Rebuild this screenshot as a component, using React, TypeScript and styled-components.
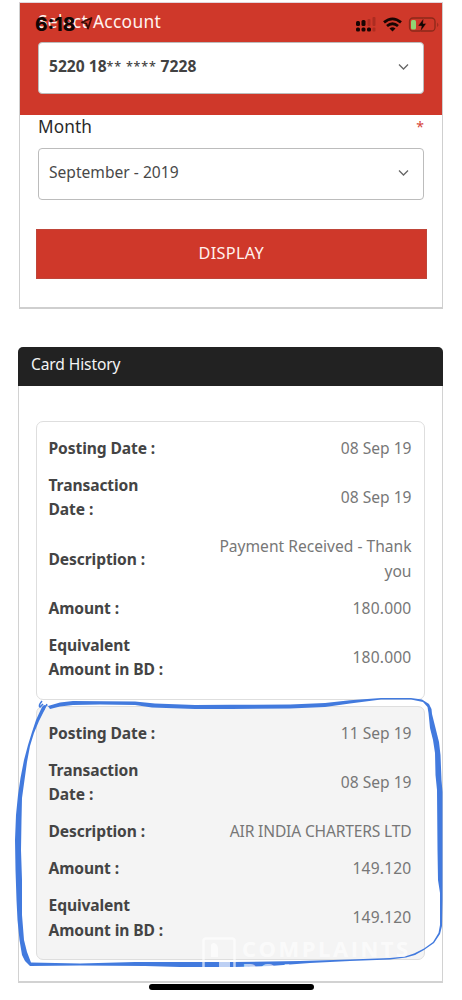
import React from "react";
import styled, { createGlobalStyle } from "styled-components";

const GlobalStyle = createGlobalStyle`
  * { box-sizing: border-box; }
  body { margin: 0; background: #fff; font-family: "Noto Sans", "Open Sans", sans-serif; font-size: 15.6px; color: #444; }
`;
const Screen = styled.main`
  position: relative;
  height: 1000px;
  overflow: hidden;
  padding: 2px 19px 0;
`;
const FormPanel = styled.section`
  height: 307px;
  border: solid #cfcfcf;
  border-width: 1px 1px 2px;
  border-top-color: #e3d5dc;
  margin-bottom: 38px;
`;
const AccountArea = styled.div`
  height: 112px;
  padding: 6px 18px 0;
  background: #cf382a;
`;
const FieldLabel = styled.label<{ $light?: boolean }>`
  display: flex;
  justify-content: space-between;
  height: 33px;
  line-height: ${(p) => (p.$light ? 25 : 23)}px;
  font-size: ${(p) => (p.$light ? 17.4 : 17.2)}px;
  letter-spacing: ${(p) => (p.$light ? 0.3 : 0.1)}px;
  color: ${(p) => (p.$light ? "#fff3ef" : "#292929")};
`;
const Required = styled.span`
  color: #d6453a;
  font-size: 14px;
  line-height: 24px;
`;
const Select = styled.div<{ $bold?: boolean }>`
  display: flex;
  align-items: center;
  justify-content: space-between;
  height: 52px;
  padding: 0 14px 4px 10px;
  border: 1px solid #bcbcbc;
  border-radius: 4px;
  background: #fff;
  color: ${(p) => (p.$bold ? "#424242" : "#484848")};
  font-weight: ${(p) => (p.$bold ? 700 : 400)};
  svg { margin-top: 2px; }
`;
const Mask = styled.span`
  font-size: 12.5px;
  font-weight: 500;
  line-height: 1;
  letter-spacing: 0.8px;
  vertical-align: 1px;
`;
const MonthArea = styled.div`
  padding: 0 18px;
`;
const DisplayButton = styled.button`
  display: block;
  width: 390.5px;
  height: 50px;
  margin: 29px 0 0 16px;
  padding: 0 0 3px;
  border: 1px solid #bf4539;
  background: #cf382a;
  color: #fff1ed;
  font: 16.3px "Noto Sans", sans-serif;
  letter-spacing: 0.3px;
`;
const HistoryPanel = styled.section`
  width: 425px;
  height: 636px;
  margin-left: -1px;
  border: solid #d2d2d2;
  border-width: 0 1px 2px;
  border-radius: 5px 5px 0 0;
`;
const HistoryTitle = styled.h2`
  height: 39px;
  margin: 0 -1px 35px;
  padding: 0 13px;
  border-radius: 5px 5px 0 0;
  background: #222;
  color: #f4f4f4;
  font-size: 15.6px;
  font-weight: 400;
  line-height: 35px;
  letter-spacing: -0.13px;
`;
const Card = styled.article<{ $shaded?: boolean }>`
  display: flex;
  flex-direction: column;
  gap: 12.3px;
  width: 388.5px;
  height: ${(p) => (p.$shaded ? 254 : 279)}px;
  margin: 0 0 6px 17px;
  padding: 14px 12px 0 11.5px;
  border: 1px solid #dedede;
  border-radius: 7px;
  background: ${(p) => (p.$shaded ? "#f4f4f4" : "#fff")};
  line-height: 24.6px;
`;
const Row = styled.div`
  display: flex;
  align-items: center;
  justify-content: space-between;
`;
const Term = styled.strong`
  width: 130px;
  white-space: pre-line;
  color: #444;
  letter-spacing: -0.1px;
`;
const Value = styled.span<{ $kind?: "number" | "caps" }>`
  width: 225px;
  white-space: pre-line;
  text-align: right;
  color: #777;
  letter-spacing: ${(p) => (p.$kind === "number" ? 0.2 : p.$kind === "caps" ? -0.17 : 0)}px;
`;
const Clock = styled.time`
  position: absolute;
  left: 35px;
  top: 12px;
  color: #120503;
  font: 800 19px/25px Inter, sans-serif;
`;
const Overlay = styled.svg`
  position: absolute;
  inset: 0;
  pointer-events: none;
`;
const Watermark = styled.div`
  position: absolute;
  left: 202px;
  top: 937px;
  display: flex;
  gap: 6px;
  color: rgba(255, 255, 255, 0.65);
  font: 700 22px/22px "Open Sans", sans-serif;
`;
const WatermarkText = styled.div`
  display: flex;
  flex-direction: column;
  letter-spacing: 2.5px;
`;
const WatermarkLine = styled.div`
  display: flex;
  gap: 8px;
  height: 22px;
  small { font-size: 9px; line-height: 12px; letter-spacing: 0.2px; }
`;
const HomeIndicator = styled.div`
  position: absolute;
  left: 149px;
  top: 984px;
  width: 165px;
  height: 6px;
  border-radius: 3px;
  background: #000;
`;

const Chevron = () => (
  <svg width="11" height="8" viewBox="0 0 11 8" fill="none" stroke="#666" strokeWidth="1.3"><path d="M1 1.5 5.5 6 10 1.5" /></svg>
);

type Entry = [string, string];
const payments: Entry[] = [
  ["Posting Date :", "08 Sep 19"],
  ["Transaction\nDate :", "08 Sep 19"],
  ["Description :", "Payment Received - Thank\nyou"],
  ["Amount :", "180.000"],
  ["Equivalent\nAmount in BD :", "180.000"],
];
const charges: Entry[] = [
  ["Posting Date :", "11 Sep 19"],
  ["Transaction\nDate :", "08 Sep 19"],
  ["Description :", "AIR INDIA CHARTERS LTD"],
  ["Amount :", "149.120"],
  ["Equivalent\nAmount in BD :", "149.120"],
];

const kindOf = (value: string) =>
  /^[\d.]+$/.test(value) ? "number" : /^[A-Z ]+$/.test(value) ? "caps" : undefined;

const Transaction = ({ rows, shaded }: { rows: Entry[]; shaded?: boolean }) => (
  <Card $shaded={shaded}>
    {rows.map(([term, value]) => (
      <Row key={term}><Term>{term}</Term><Value $kind={kindOf(value)}>{value}</Value></Row>
    ))}
  </Card>
);

const StatusIcons = () => (
  <g>
    <path d="M82 22.300 91.500 18 88 28.500 86.300 23.500Z" fill="none" stroke="#3b0b06" strokeWidth="1.8" strokeLinejoin="round" />
    <g fill="#180503">
      <rect x="356" y="21" width="4" height="5" rx="1.5" />
      <rect x="361.5" y="20" width="4" height="6" rx="1.5" />
      <rect x="356" y="27.5" width="4" height="4" rx="1.5" />
      <rect x="361.5" y="27.5" width="4" height="4" rx="1.5" />
      <rect x="367" y="27.5" width="4" height="4" rx="1.5" />
    </g>
    <g fill="#ad2c21">
      <rect x="367.5" y="19" width="3" height="7" rx="1" />
      <rect x="372.5" y="17" width="3" height="9" rx="1" />
      <rect x="372.5" y="27.5" width="3" height="4" rx="1" />
    </g>
    <g fill="none" stroke="#180503" strokeWidth="2.8">
      <path d="M384 22.4Q392.5 15.3 401 22.4" />
      <path d="M387 26Q392.5 21.4 398 26" />
    </g>
    <path d="M389.5 28.5Q392.5 26 395.5 28.5L392.5 31.5Z" fill="#180503" />
    <rect x="409.5" y="18" width="25.5" height="13" rx="3.5" fill="none" stroke="#8b291a" strokeWidth="1.3" />
    <path d="M437.3 22.5v4.5q2-2 0-4.5" fill="#8b291a" />
    <rect x="411" y="20" width="5" height="9.5" rx="1.5" fill="#91d574" />
    <path d="m423.5 18.5-5.5 7.5h3.5l-1 5.5 5.8-8H423Z" fill="#120503" stroke="#cf382a" strokeWidth=".4" />
  </g>
);

export default function App() {
  return (
    <Screen>
      <GlobalStyle />
      <FormPanel>
        <AccountArea>
          <FieldLabel $light>Select Account</FieldLabel>
          <Select $bold>
            <span>5220 18<Mask>**</Mask> <Mask>****</Mask> 7228</span>
            <Chevron />
          </Select>
        </AccountArea>
        <MonthArea>
          <FieldLabel>Month<Required>*</Required></FieldLabel>
          <Select>September - 2019<Chevron /></Select>
        </MonthArea>
        <DisplayButton>DISPLAY</DisplayButton>
      </FormPanel>
      <HistoryPanel>
        <HistoryTitle>Card History</HistoryTitle>
        <Transaction rows={payments} />
        <Transaction rows={charges} shaded />
      </HistoryPanel>
      <Overlay width="462" height="1000" viewBox="0 0 462 1000">
        <path
          fill="#427ade"
          d="M44 705L48 706 60 702.500 73 701 135 701.500 155 703.500 195 705 231 704.800 290 704.500 325 703 350 700.300 381 698H411L422 699.500 429 704 431.500 709 432 714 436 730 439 742 440.500 755 441.500 780 442.500 792V900L442 926 440 934 434 943 424 950 415 955 406 957.500 390 959.500 350 961 310 963 270 966 234 967H180L145 966 80 965.500 30 966 25 961 22 955 19.500 940 17.500 920 16.500 900 15.500 870 15 840 16 815 18 795 20.500 778 24 760 28 745 32 732 36 720 42 707ZM46.500 704L45 709 39 721 34 733 30 746 27 762 24.500 780 22 798 21.500 820 21 850 22 880 22 915 24 940 27 952 31 962.500 80 963.500 135 962 180 962 234 962 300 961 350 959.500 390 958 405 956.500 414 953.500 424 948.500 433 942 438.500 933 440 925 440 893 438 880 437.500 850 437 790 435.500 775 435 753 433 740 430 728 428.500 713 427.500 707 423 702 411 699.500H381L350 703.500 325 707 290 708.500 231 709H195L152 707.500 135 705 100 704.500 73 705 60 706.500 50 709Z"
        />
        <path d="M42 701Q38 706 40 707L43 704M47 704 43 711" fill="none" stroke="#427ade" strokeWidth="1.5" />
      </Overlay>
      <Watermark>
        <svg width="34" height="30" viewBox="0 0 34 30" fill="none">
          <path d="M1.500 30V4Q1.500 1.500 4 1.500H30Q32.500 1.500 32.500 4V30" stroke="currentColor" strokeWidth="2.5" />
          <path d="M9 9Q9 6 12 6 16 7 16 12V20H9ZM17 24h11v6H17Z" fill="currentColor" />
        </svg>
        <WatermarkText>
          <WatermarkLine>COMPLAINTS</WatermarkLine>
          <WatermarkLine>BOARD <small>RESOLVED</small></WatermarkLine>
        </WatermarkText>
      </Watermark>
      <Overlay width="462" height="60" viewBox="0 0 462 60">
        <StatusIcons />
      </Overlay>
      <Clock>6:18</Clock>
      <HomeIndicator />
    </Screen>
  );
}
